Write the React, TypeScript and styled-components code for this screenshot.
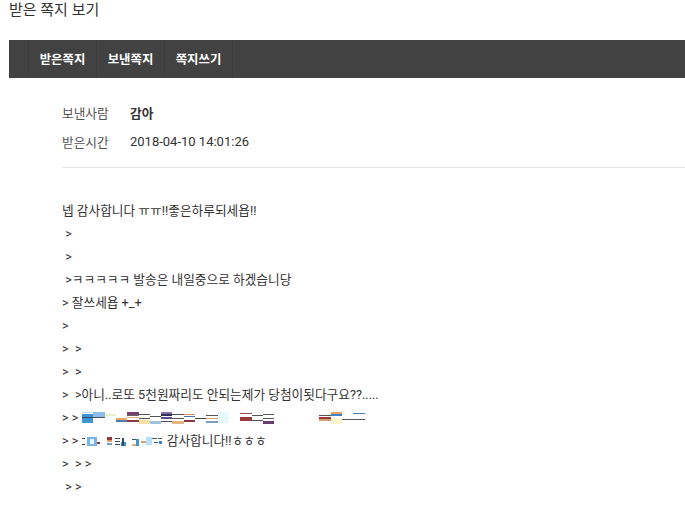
import React from "react";
import styled, { createGlobalStyle } from "styled-components";

const Global = createGlobalStyle`
  html, body { margin: 0; padding: 0; background: #fff; }
  body { font-family: Roboto, "Noto Sans CJK KR", "Noto Sans", sans-serif; color: #333; }
`;

const Page = styled.div`
  padding: 0 0 0 9px;
  width: 676px;
`;

const Title = styled.h1`
  margin: 0;
  height: 40px;
  font-size: 15px;
  font-weight: 400;
  line-height: 20px;
  color: #333;
`;

const Nav = styled.nav`
  display: flex;
  height: 38px;
  background: #424242;
  padding-left: 19px;
`;

const NavItem = styled.a`
  display: flex;
  align-items: center;
  justify-content: center;
  width: 67px;
  border-left: 1px solid #37403f;
  color: #fff;
  font-size: 12.4px;
  font-weight: 700;
  text-decoration: none;
  &:last-child { border-right: 1px solid #37403f; }
`;

const Info = styled.div`
  margin: 20px 0 0 53px;
  padding-bottom: 11px;
  border-bottom: 1px solid #e6e6e6;
`;

const InfoRow = styled.div`
  display: flex;
  height: 29px;
  align-items: center;
  font-size: 12.7px;
`;

const Label = styled.span`
  width: 68px;
  color: #555;
`;

const Value = styled.span<{ $bold?: boolean }>`
  color: #333;
  font-weight: ${(p) => (p.$bold ? 700 : 400)};
  font-size: ${(p) => (p.$bold ? "12.7px" : "13px")};
`;

const Body = styled.div`
  margin: 31px 0 0 53px;
  font-size: 12.7px;
  color: #333;
`;

const Line = styled.div`
  height: 23px;
  line-height: 23px;
  white-space: pre;
  display: flex;
  align-items: center;
`;

type Block = [number, number, number, number, string];

const Garble = ({ w, blocks }: { w: number; blocks: Block[] }) => (
  <svg width={w} height={12} viewBox={`0 0 ${w} 12`} style={{ display: "block" }}>
    {blocks.map(([x, y, bw, bh, c], i) => (
      <rect key={i} x={x} y={y} width={bw} height={bh} fill={c} />
    ))}
  </svg>
);

const row10: Block[] = [
  [0, 0, 11, 1, "#c9dcef"], [0, 2, 11, 9, "#3d94d3"], [0, 5, 11, 1, "#2d4a66"],
  [11, 0, 12, 5, "#8fbde9"], [11, 5, 12, 1, "#555"],
  [23, 2, 11, 2, "#e6f0c8"],
  [34, 6, 11, 2, "#e8a95a"], [34, 8, 11, 2, "#4f7fae"],
  [45, 0, 12, 3, "#7a3f6a"], [45, 3, 12, 1, "#666"], [45, 8, 12, 2, "#8a3a3e"], [45, 5, 12, 1, "#e9b27e"],
  [57, 2, 11, 1, "#555"], [57, 6, 11, 1, "#555"], [57, 8, 11, 4, "#f7dea2"],
  [68, 4, 11, 1, "#555"], [68, 9, 11, 3, "#9cc3df"],
  [79, 0, 11, 2, "#8a6fb0"], [79, 2, 11, 2, "#2e2e56"], [79, 5, 11, 2, "#5a4e8c"], [79, 9, 11, 1, "#555"],
  [90, 2, 12, 1, "#555"], [90, 6, 12, 1, "#555"], [90, 9, 12, 3, "#e3b383"],
  [102, 2, 11, 1, "#d98e5a"], [102, 4, 11, 1, "#4b73b4"], [102, 8, 11, 2, "#8a3a3e"],
  [113, 6, 11, 1, "#444"],
  [124, 3, 12, 1, "#555"], [124, 6, 12, 1, "#cda06d"], [124, 9, 12, 2, "#7c9fc4"],
  [136, 0, 11, 11, "#e6fafc"],
  [158, 1, 12, 1, "#a34a4a"], [158, 5, 12, 4, "#9a3a3a"],
  [170, 3, 11, 1, "#555"], [170, 8, 11, 1, "#555"],
  [181, 2, 11, 1, "#555"], [181, 6, 11, 1, "#555"], [181, 9, 11, 3, "#6a3b72"],
  [237, 3, 12, 1, "#555"], [237, 5, 12, 2, "#9a3a3a"], [237, 7, 12, 2, "#d8a070"],
  [249, 0, 11, 2, "#e6a15a"], [249, 2, 11, 2, "#3d7fd0"], [249, 6, 11, 6, "#fdf7d0"],
  [260, 7, 11, 1, "#555"],
  [271, 1, 12, 1, "#4a7fc4"], [271, 7, 12, 1, "#555"],
];

const row11: Block[] = [
  [0, 3, 3, 1, "#444"], [0, 9, 3, 1, "#444"],
  [5, 2, 10, 9, "#7ab4e8"], [8, 4, 4, 5, "#e8f4fc"],
  [15, 7, 3, 2, "#8a3a3e"],
  [25, 2, 5, 3, "#8a3a3e"], [25, 5, 5, 2, "#d8a070"], [25, 8, 5, 2, "#7c9fc4"],
  [33, 3, 5, 1, "#444"], [33, 6, 5, 1, "#444"], [33, 9, 5, 1, "#444"],
  [39, 7, 5, 4, "#3d94d3"], [40, 3, 2, 8, "#2d4a66"],
  [50, 4, 4, 1, "#555"], [50, 9, 4, 2, "#e6b07e"], [54, 4, 3, 7, "#3d94d3"],
  [59, 6, 5, 2, "#d8a070"], [64, 2, 6, 8, "#b7e1fa"],
  [70, 3, 5, 1, "#555"], [72, 7, 4, 1, "#555"], [76, 3, 4, 1, "#555"], [77, 6, 3, 3, "#3d7fd0"],
];

const Txt = styled.span``;

export default function App() {
  return (
    <Page>
      <Global />
      <Title>받은 쪽지 보기</Title>
      <Nav>
        <NavItem>받은쪽지</NavItem>
        <NavItem>보낸쪽지</NavItem>
        <NavItem>쪽지쓰기</NavItem>
      </Nav>
      <Info>
        <InfoRow>
          <Label>보낸사람</Label>
          <Value $bold>감아</Value>
        </InfoRow>
        <InfoRow>
          <Label>받은시간</Label>
          <Value>2018-04-10 14:01:26</Value>
        </InfoRow>
      </Info>
      <Body>
        <Line>넵 감사합니다 ㅠㅠ!!좋은하루되세욥!!</Line>
        <Line> &gt;</Line>
        <Line> &gt;</Line>
        <Line> &gt;ㅋㅋㅋㅋㅋ 발송은 내일중으로 하겠습니당</Line>
        <Line>&gt; 잘쓰세욥 +_+</Line>
        <Line>&gt;</Line>
        <Line>&gt;  &gt;</Line>
        <Line>&gt;  &gt;</Line>
        <Line>&gt;  &gt;아니..로또 5천원짜리도 안되는제가 당첨이됫다구요??.....</Line>
        <Line>
          <Txt>&gt; &gt; </Txt>
          <Garble w={284} blocks={row10} />
        </Line>
        <Line>
          <Txt>&gt; &gt; </Txt>
          <Garble w={82} blocks={row11} />
          <Txt> 감사합니다!!ㅎㅎㅎ</Txt>
        </Line>
        <Line>&gt;  &gt; &gt;</Line>
        <Line> &gt; &gt;</Line>
      </Body>
    </Page>
  );
}
